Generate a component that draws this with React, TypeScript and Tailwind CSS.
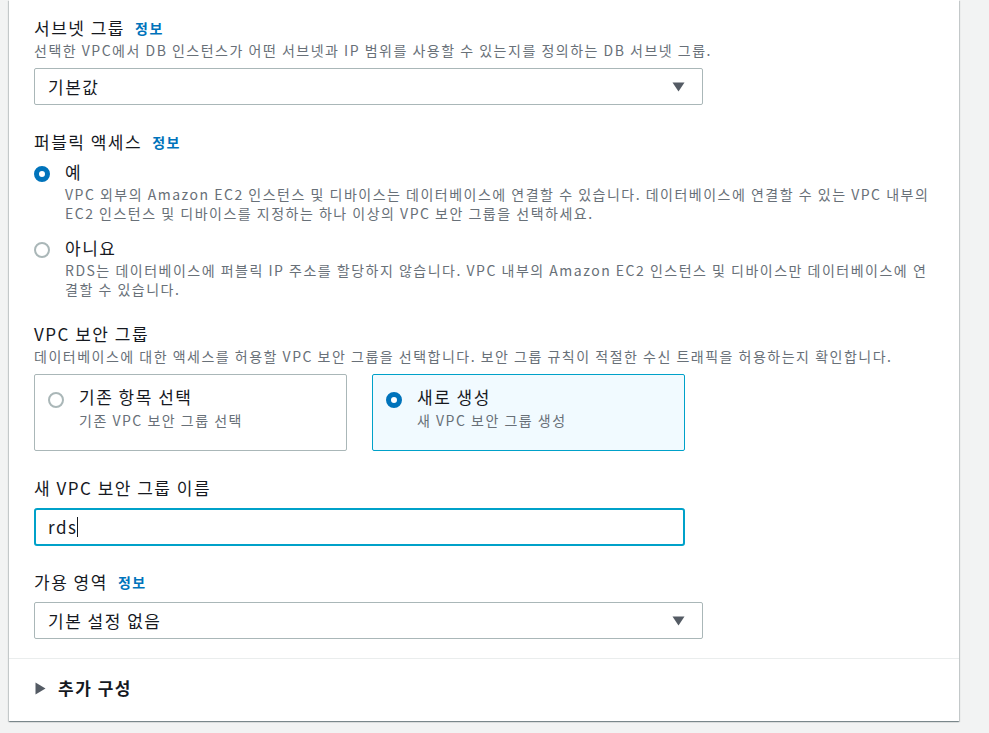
import React from "react";

function Caret() {
  return (
    <svg width="13" height="10" viewBox="0 0 13 10" className="shrink-0">
      <path d="M0.5 0.5 H12.5 L6.5 9.5 Z" fill="#545b64" />
    </svg>
  );
}

function Label({ text, info }: { text: string; info?: boolean }) {
  return (
    <div className="flex items-center h-[22px] text-[17px] leading-[22px] tracking-[1.5px] text-[#16191f]">
      <span>{text}</span>
      {info && (
        <span className="ml-[10px] text-[14px] font-bold tracking-[1.5px] text-[#0073bb]">정보</span>
      )}
    </div>
  );
}

function Radio({ checked }: { checked: boolean }) {
  return checked ? (
    <span className="block w-[16px] h-[16px] rounded-full border-[5px] border-[#0073bb] bg-white shrink-0" />
  ) : (
    <span className="block w-[16px] h-[16px] rounded-full border-2 border-[#aab7b8] bg-white shrink-0" />
  );
}

function Select({ value }: { value: string }) {
  return (
    <div className="w-[669px] h-[37px] border border-[#aab7b8] rounded-[2px] bg-white flex items-center justify-between pl-[13px] pr-[17px] text-[17px] tracking-[1.5px] text-[#16191f]">
      <span>{value}</span>
      <Caret />
    </div>
  );
}

export default function App() {
  return (
    <div className="min-h-screen bg-[#f2f3f3] font-['Noto_Sans_CJK_KR','Noto_Sans',sans-serif] text-[#16191f]">
      <div className="ml-[9px] w-[950px] bg-white shadow-[0_1px_1px_0_rgba(0,28,36,0.3),1px_1px_1px_0_rgba(0,28,36,0.15),-1px_1px_1px_0_rgba(0,28,36,0.15)]">
        <div className="pl-[25px] pr-[20px] pt-[17px] pb-[19px]">
          {/* Subnet group */}
          <Label text="서브넷 그룹" info />
          <div className="mt-[1px] text-[14px] leading-[20px] tracking-[1.5px] text-[#687078]">
            선택한 VPC에서 DB 인스턴스가 어떤 서브넷과 IP 범위를 사용할 수 있는지를 정의하는 DB 서브넷 그룹.
          </div>
          <div className="mt-[8px]">
            <Select value="기본값" />
          </div>

          {/* Public access */}
          <div className="mt-[26px]">
            <Label text="퍼블릭 액세스" info />
          </div>
          <div className="mt-[8px] flex">
            <div className="pt-[5px]">
              <Radio checked />
            </div>
            <div className="ml-[15px]">
              <div className="text-[17px] leading-[22px] tracking-[1.5px]">예</div>
              <div className="mt-[2px] text-[14px] leading-[19px] tracking-[1.5px] text-[#687078] whitespace-nowrap">
                VPC 외부의 Amazon EC2 인스턴스 및 디바이스는 데이터베이스에 연결할 수 있습니다. 데이터베이스에 연결할 수 있는 VPC 내부의
                <br />
                EC2 인스턴스 및 디바이스를 지정하는 하나 이상의 VPC 보안 그룹을 선택하세요.
              </div>
            </div>
          </div>
          <div className="mt-[14px] flex">
            <div className="pt-[5px]">
              <Radio checked={false} />
            </div>
            <div className="ml-[15px]">
              <div className="text-[17px] leading-[22px] tracking-[1.5px]">아니요</div>
              <div className="mt-[2px] text-[14px] leading-[19px] tracking-[1.5px] text-[#687078] whitespace-nowrap">
                RDS는 데이터베이스에 퍼블릭 IP 주소를 할당하지 않습니다. VPC 내부의 Amazon EC2 인스턴스 및 디바이스만 데이터베이스에 연
                <br />
                결할 수 있습니다.
              </div>
            </div>
          </div>

          {/* VPC security group */}
          <div className="mt-[24px]">
            <Label text="VPC 보안 그룹" />
          </div>
          <div className="mt-[1px] text-[14px] leading-[20px] tracking-[1.5px] text-[#687078] whitespace-nowrap">
            데이터베이스에 대한 액세스를 허용할 VPC 보안 그룹을 선택합니다. 보안 그룹 규칙이 적절한 수신 트래픽을 허용하는지 확인합니다.
          </div>
          <div className="mt-[8px] flex gap-[25px]">
            <div className="w-[313px] h-[77px] border border-[#aab7b8] rounded-[2px] bg-white flex pl-[13px] pt-[11px]">
              <div className="pt-[6px]">
                <Radio checked={false} />
              </div>
              <div className="ml-[15px]">
                <div className="text-[17px] leading-[22px] tracking-[1.5px]">기존 항목 선택</div>
                <div className="mt-[2px] text-[14px] leading-[20px] tracking-[1.5px] text-[#687078]">기존 VPC 보안 그룹 선택</div>
              </div>
            </div>
            <div className="w-[313px] h-[77px] border border-[#00a1c9] rounded-[2px] bg-[#f1faff] flex pl-[13px] pt-[11px]">
              <div className="pt-[6px]">
                <Radio checked />
              </div>
              <div className="ml-[15px]">
                <div className="text-[17px] leading-[22px] tracking-[1.5px]">새로 생성</div>
                <div className="mt-[2px] text-[14px] leading-[20px] tracking-[1.5px] text-[#687078]">새 VPC 보안 그룹 생성</div>
              </div>
            </div>
          </div>

          {/* New SG name */}
          <div className="mt-[26px]">
            <Label text="새 VPC 보안 그룹 이름" />
          </div>
          <div className="mt-[9px] w-[651px] h-[38px] border-2 border-[#00a1c9] rounded-[3px] bg-white flex items-center pl-[12px] text-[17px] tracking-[1.5px]">
            <span>rds</span>
            <span className="w-[1px] h-[20px] bg-[#16191f]" />
          </div>

          {/* Availability zone */}
          <div className="mt-[25px]">
            <Label text="가용 영역" info />
          </div>
          <div className="mt-[9px]">
            <Select value="기본 설정 없음" />
          </div>
        </div>

        <div className="border-t border-[#eaeded] pl-[26px] pt-[18px] pb-[22px] flex items-center">
          <svg width="11" height="13" viewBox="0 0 11 13" className="shrink-0">
            <path d="M0.5 0.5 L10.5 6.5 L0.5 12.5 Z" fill="#545b64" />
          </svg>
          <span className="ml-[12px] text-[17px] leading-[22px] font-bold tracking-[1.5px] text-[#16191f]">추가 구성</span>
        </div>
      </div>
    </div>
  );
}
